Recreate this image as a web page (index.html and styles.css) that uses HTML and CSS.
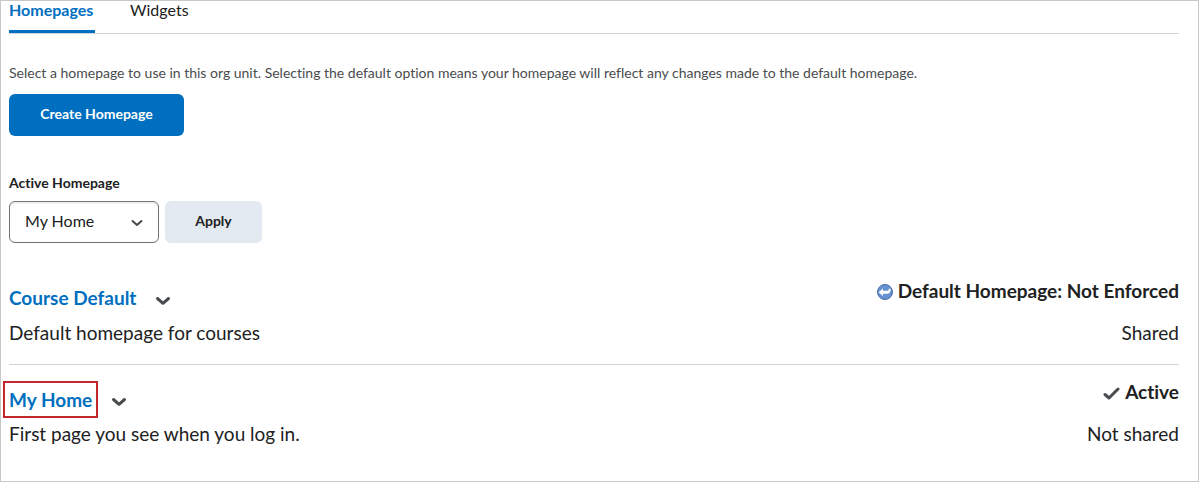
FILE: index.html
```
<!DOCTYPE html>
<html lang="en">
<head>
<meta charset="UTF-8">
<meta name="viewport" content="width=device-width, initial-scale=1.0">
<title>Homepages</title>
<link rel="stylesheet" href="styles.css">
</head>
<body>

<nav class="tabs">
    <a href="#homepages" class="tab selected">Homepages</a>
    <a href="#widgets" class="tab">Widgets</a>
</nav>

<main>
    <p class="intro">Select a homepage to use in this org unit. Selecting the default option means your homepage will reflect any changes made to the default homepage.</p>
    <button type="button" class="btn primary">Create Homepage</button>

    <form class="active-form">
        <label for="active-homepage">Active Homepage</label>
        <div class="controls">
            <div class="select-wrap">
                <select id="active-homepage">
                    <option>My Home</option>
                    <option>Course Default</option>
                </select>
                <svg class="arrow" width="12" height="8" viewBox="0 0 12 8"><path d="M1.500 2l4.500 4 4.500-4" fill="none" stroke="#494c4e" stroke-width="2" stroke-linecap="round" stroke-linejoin="round"/></svg>
            </div>
            <button type="button" class="btn">Apply</button>
        </div>
    </form>

    <ul class="list">
        <li class="row">
            <div class="name">
                <a href="#course-default">Course Default</a>
                <button type="button" class="menu" aria-label="Actions for Course Default">
                    <svg width="16" height="10" viewBox="0 0 16 10"><path d="M2.500 2.500L8 7.300l5.500-4.800" fill="none" stroke="#494c4e" stroke-width="3" stroke-linecap="round" stroke-linejoin="round"/></svg>
                </button>
            </div>
            <div class="status">
                <svg width="18" height="18" viewBox="0 0 18 18">
                    <circle cx="9" cy="10" r="7.500" fill="#6793d3" stroke="#47699f"/>
                    <path d="M2.500 10.200L7 6.500v2.300h4.300c1 0 1.500-.5 1.500-2h1.800c.3 3-.9 4.900-3.200 4.900H7v2.300z" fill="#fff"/>
                </svg>
                Default Homepage: Not Enforced
            </div>
            <div>Default homepage for courses</div>
            <div class="shared">Shared</div>
        </li>
        <li class="row">
            <div class="name">
                <a href="#my-home" class="marked">My Home</a>
                <button type="button" class="menu" aria-label="Actions for My Home">
                    <svg width="16" height="10" viewBox="0 0 16 10"><path d="M2.500 2.500L8 7.300l5.500-4.800" fill="none" stroke="#494c4e" stroke-width="3" stroke-linecap="round" stroke-linejoin="round"/></svg>
                </button>
            </div>
            <div class="status">
                <svg width="18" height="18" viewBox="0 0 18 18"><path d="M2 11.500l4 3.500 9-9" fill="none" stroke="#494c4e" stroke-width="3" stroke-linecap="round" stroke-linejoin="round"/></svg>
                Active
            </div>
            <div>First page you see when you log in.</div>
            <div class="shared">Not shared</div>
        </li>
    </ul>
</main>

</body>
</html>
```
FILE: styles.css
```
* {
    box-sizing: border-box;
}

body {
    margin: 0;
    padding: 0 19px 0 8px;
    min-height: 100vh;
    border: 1px solid #c8c8c8;
    background: #fff;
    color: #202122;
    font-family: Lato, "Liberation Sans", sans-serif;
    font-size: 19px;
    font-variant-ligatures: none;
    line-height: 28px;
}

a {
    color: #006fbf;
    text-decoration: none;
}

.tabs {
    display: flex;
    gap: 35px;
    border-bottom: 1px solid #cdd5dc;
}

.tab {
    height: 32px;
    color: #202122;
    font-size: 16px;
    line-height: 18px;
}

.tab.selected {
    min-width: 86px;
    color: #006fbf;
    font-weight: bold;
    border-bottom: 3px solid #006fbf;
}

.intro {
    margin: 29px 0 11px;
    color: #494c4e;
    font-size: 14px;
    line-height: 20px;
}

.btn {
    display: block;
    min-width: 97px;
    height: 42px;
    padding: 0 16px 3px;
    border: 0;
    border-radius: 6px;
    background: #e3e9f1;
    color: #202122;
    font-family: inherit;
    font-size: 14px;
    font-weight: bold;
}

.btn.primary {
    min-width: 175px;
    background: #006fbf;
    color: #fff;
}

.active-form {
    margin-top: 37px;
}

.active-form label {
    display: block;
    margin-bottom: 8px;
    font-size: 14px;
    font-weight: bold;
    line-height: 20px;
}

.controls {
    display: flex;
    gap: 6px;
}

.select-wrap {
    position: relative;
}

select {
    display: block;
    width: 150px;
    height: 42px;
    padding: 0 40px 3px 15px;
    appearance: none;
    border: 1px solid #6e7376;
    border-radius: 6px;
    background: #fff;
    box-shadow: inset 0 2px 0 #f2f3f5;
    color: #202122;
    font-family: inherit;
    font-size: 16px;
}

.arrow {
    position: absolute;
    right: 16px;
    top: 18px;
    pointer-events: none;
}

.list {
    margin: 21px 0 0;
    padding: 0;
    list-style: none;
}

.row {
    display: grid;
    grid-template-columns: 1fr auto;
    padding: 13px 0 17px;
}

.row + .row {
    border-top: 1px solid #cdd5dc;
}

.name {
    display: flex;
    align-items: center;
    gap: 19px;
    height: 42px;
    font-weight: bold;
}

.menu {
    padding: 5px 0 0;
    border: 0;
    background: none;
    line-height: 0;
}

/* box drawn round the link, outside its text */
.marked {
    padding: 2px 0;
    outline: 2px solid #c4262e;
    outline-offset: 4px;
    line-height: 21px;
}

.status {
    display: flex;
    justify-content: flex-end;
    align-items: center;
    gap: 4px;
    height: 28px;
    font-weight: bold;
}

.shared {
    text-align: right;
}
```
